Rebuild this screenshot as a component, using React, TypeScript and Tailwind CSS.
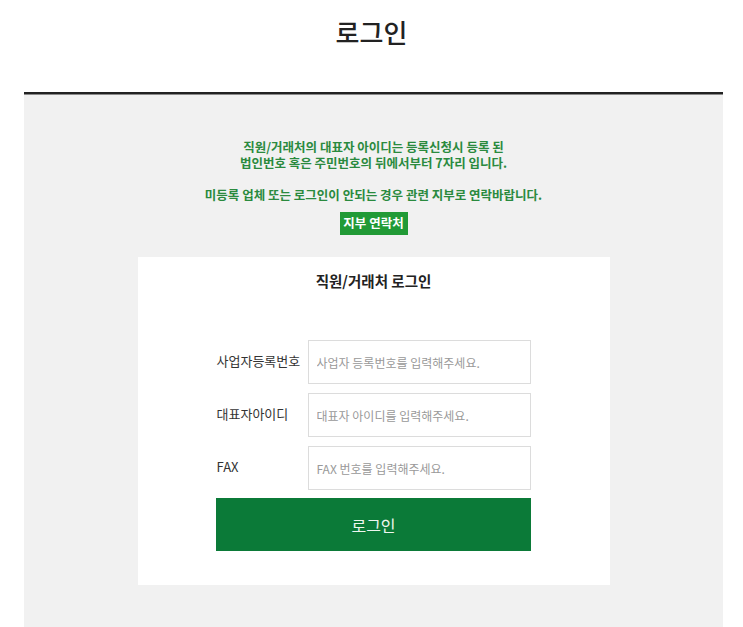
import React from "react";

const font = { fontFamily: '"Noto Sans CJK KR", "Noto Sans", sans-serif' };

function Row({ label, placeholder }: { label: string; placeholder: string }) {
  return (
    <div className="flex items-center">
      <div className="w-[91px] text-[13px] text-[#333] -mt-[2px] leading-[18px]">{label}</div>
      <input
        className="w-[223px] h-[44px] border border-[#dcdcdc] bg-white pl-[8px] text-[12px] text-[#333] placeholder:text-[#999] outline-none"
        placeholder={placeholder}
        style={font}
      />
    </div>
  );
}

export default function App() {
  return (
    <div className="w-[743px] h-[627px] bg-white overflow-hidden" style={font}>
      <div className="h-[92px] flex justify-center pt-[14px]">
        <h1 className="text-[26px] leading-[36px] text-[#222] font-medium">로그인</h1>
      </div>
      <div className="ml-[24px] w-[699px] bg-[#f1f1f1] flex flex-col">
        <div className="h-[2px] bg-[#222]" />
        <div className="h-px bg-[#8a8a8a]" />
        <div className="flex flex-col items-center pt-[44px] pb-[42px]">
          <p className="text-[12.5px] font-bold leading-[16px] text-[#2a8a3e] text-center">
            직원/거래처의 대표자 아이디는 등록신청시 등록 된
            <br />
            법인번호 혹은 주민번호의 뒤에서부터 7자리 입니다.
          </p>
          <p className="mt-[16px] text-[12.5px] font-bold leading-[16px] text-[#2a8a3e] text-center">
            미등록 업체 또는 로그인이 안되는 경우 관련 지부로 연락바랍니다.
          </p>
          <div className="mt-[9px] w-[68px] h-[23px] bg-[#219a36] text-white text-[12.5px] font-bold flex items-center justify-center">
            지부 연락처
          </div>
          <div className="mt-[22px] w-[472px] h-[328px] bg-white flex flex-col items-center pt-[14px]">
            <div className="text-[14.5px] font-bold text-[#222] leading-[20px]">직원/거래처 로그인</div>
            <div className="mt-[49px] flex flex-col gap-[9px]">
              <Row label="사업자등록번호" placeholder="사업자 등록번호를 입력해주세요." />
              <Row label="대표자아이디" placeholder="대표자 아이디를 입력해주세요." />
              <Row label="FAX" placeholder="FAX 번호를 입력해주세요." />
            </div>
            <button className="mt-[8px] w-[315px] h-[53px] bg-[#0b7a38] text-[#eef6ef] text-[16px]" style={font}>
              로그인
            </button>
          </div>
        </div>
      </div>
    </div>
  );
}
